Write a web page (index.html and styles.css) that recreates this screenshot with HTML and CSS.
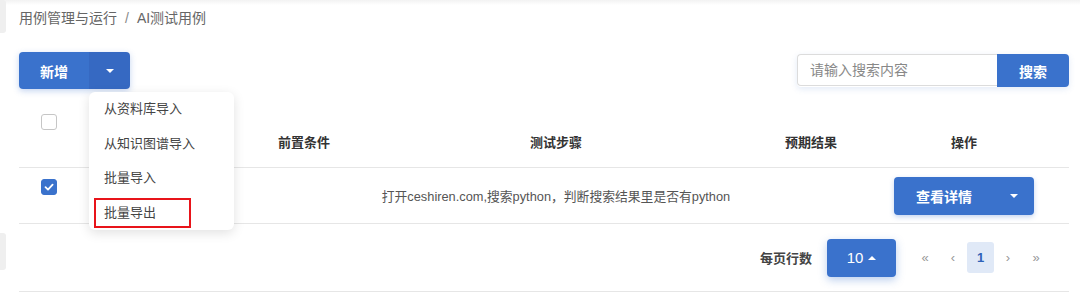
FILE: index.html
```html
<!DOCTYPE html>
<html lang="zh-CN">
<head>
    <meta charset="UTF-8">
    <meta name="viewport" content="width=device-width, initial-scale=1.0">
    <title>AI测试用例</title>
    <link rel="stylesheet" href="styles.css">
</head>
<body>
    <div class="side">
        <div class="side-item top"></div>
        <div class="side-item low"></div>
    </div>
    <div class="main">
        <div class="breadcrumb">
            <span>用例管理与运行</span>
            <span class="sep">/</span>
            <span>AI测试用例</span>
        </div>

        <div class="toolbar">
            <div class="split">
                <button class="btn btn-main">新增</button>
                <button class="btn btn-drop"><span class="caret"></span></button>
                <div class="menu">
                    <div class="menu-item">从资料库导入</div>
                    <div class="menu-item">从知识图谱导入</div>
                    <div class="menu-item">批量导入</div>
                    <div class="menu-item">批量导出</div>
                    <div class="mark"></div>
                </div>
            </div>
            <div class="search">
                <input type="text" placeholder="请输入搜索内容">
                <button class="btn btn-search">搜索</button>
            </div>
        </div>

        <div class="table">
            <div class="row head">
                <div class="cell check-cell"><span class="checkbox"></span></div>
                <div class="cell"></div>
                <div class="cell">前置条件</div>
                <div class="cell">测试步骤</div>
                <div class="cell">预期结果</div>
                <div class="cell">操作</div>
                <div class="cell"></div>
            </div>
            <div class="row body">
                <div class="cell check-cell"><span class="checkbox checked">
                    <svg width="12" height="12" viewBox="0 0 12 12"><path d="M2.5 6.2 L5 8.6 L9.6 3.6" fill="none" stroke="#fff" stroke-width="1.8" stroke-linecap="round" stroke-linejoin="round"/></svg>
                </span></div>
                <div class="cell"></div>
                <div class="cell"></div>
                <div class="cell step">打开ceshiren.com,搜索python，判断搜索结果里是否有python</div>
                <div class="cell"></div>
                <div class="cell">
                    <button class="btn btn-detail">查看详情<span class="caret"></span></button>
                </div>
                <div class="cell"></div>
            </div>
        </div>

        <div class="pager">
            <span class="pager-label">每页行数</span>
            <button class="btn btn-size">10<span class="caret up"></span></button>
            <div class="pages">
                <span class="page">&laquo;</span>
                <span class="page">&lsaquo;</span>
                <span class="page current">1</span>
                <span class="page">&rsaquo;</span>
                <span class="page">&raquo;</span>
            </div>
        </div>
    </div>
</body>
</html>
```

FILE: styles.css
```css
body {
    margin: 0;
    height: 305px;
    display: flex;
    font-family: "Liberation Sans", "Noto Sans CJK SC", sans-serif;
    color: #333;
    background: linear-gradient(#f2f2f2, #fff 5px);
    overflow: hidden;
}
.side {
    width: 6px;
    display: flex;
    flex-direction: column;
}
.side-item {
    background-color: #efefef;
    border-radius: 0 3px 3px 0;
}
.side-item.top {
    height: 33px;
}
.side-item.low {
    height: 37px;
    margin-top: 200px;
}
.main {
    flex: 1;
    padding: 8px 11px 0 13px;
}
.breadcrumb {
    height: 20px;
    line-height: 20px;
    font-size: 14px;
    color: #666;
    display: flex;
    gap: 8px;
}
.breadcrumb .sep {
    color: #888;
}
.toolbar {
    margin-top: 24px;
    display: flex;
    justify-content: space-between;
    align-items: center;
}
.btn {
    border: none;
    color: #fff;
    background-color: #3a72cc;
    font-family: inherit;
    font-weight: bold;
    font-size: 14px;
    cursor: pointer;
    padding: 0;
}
.caret {
    display: inline-block;
    width: 0;
    height: 0;
    border-left: 4px solid transparent;
    border-right: 4px solid transparent;
    border-top: 4px solid #fff;
}
.caret.up {
    border-top: none;
    border-bottom: 4px solid #fff;
    margin-left: 5px;
    vertical-align: 3px;
}
.split {
    position: relative;
    display: flex;
    box-shadow: 0 2px 6px rgba(58, 114, 204, 0.3);
    border-radius: 4px;
}
.btn-main {
    width: 70px;
    height: 37px;
    border-radius: 4px 0 0 4px;
}
.btn-drop {
    width: 41px;
    height: 37px;
    background-color: #3669c2;
    border-radius: 0 4px 4px 0;
}
.btn-drop .caret {
    vertical-align: 3px;
}
.menu {
    position: absolute;
    left: 70px;
    top: 40px;
    width: 145px;
    height: 138px;
    background: #fff;
    border-radius: 6px;
    box-shadow: 0 3px 12px rgba(0, 0, 0, 0.12);
    z-index: 5;
}
.menu-item {
    height: 34.5px;
    line-height: 34.5px;
    padding-left: 15px;
    font-size: 13px;
    color: #444;
}
.mark {
    position: absolute;
    left: 5px;
    top: 106px;
    width: 93px;
    height: 26px;
    border: 2px solid #e8141a;
}
.search {
    display: flex;
    box-shadow: 0 2px 6px rgba(58, 114, 204, 0.15);
    border-radius: 4px;
}
.search input {
    width: 200px;
    height: 32px;
    box-sizing: border-box;
    border: 1px solid #dcdcdc;
    border-right: none;
    border-radius: 4px 0 0 4px;
    padding: 0 12px;
    font-family: inherit;
    font-size: 14px;
    outline: none;
}
.search input::placeholder {
    color: #888;
}
.btn-search {
    width: 72px;
    height: 33px;
    border-radius: 0 4px 4px 0;
}
.table {
    margin-top: 11px;
}
.row {
    display: grid;
    grid-template-columns: 56px 155px 148px 356px 154px 152px 1fr;
    border-bottom: 1px solid #e6e6e6;
}
.row.head {
    height: 67px;
    align-items: end;
    font-size: 13px;
    font-weight: bold;
    color: #333;
}
.row.head .cell {
    padding-bottom: 16px;
}
.row.head .check-cell {
    align-self: start;
    padding-top: 14px;
    padding-bottom: 0;
}
.row.body {
    height: 55px;
    align-items: center;
    font-size: 12.8px;
    color: #555;
}
.row.body .check-cell {
    align-self: start;
    padding-top: 11px;
}
.cell {
    text-align: center;
    white-space: nowrap;
}
.check-cell {
    text-align: left;
    padding-left: 22px;
}
.checkbox {
    display: flex;
    align-items: center;
    justify-content: center;
    width: 16px;
    height: 16px;
    box-sizing: border-box;
    border: 1.5px solid #c6c6c6;
    border-radius: 3px;
    background: #fff;
}
.checkbox.checked {
    background: #3a72cc;
    border-color: #3a72cc;
}
.btn-detail {
    width: 140px;
    height: 38px;
    border-radius: 4px;
    box-shadow: 0 2px 5px rgba(58, 114, 204, 0.3);
    padding-left: 22px;
    text-align: left;
    position: relative;
}
.btn-detail .caret {
    position: absolute;
    right: 16px;
    top: 17px;
}
.pager {
    height: 67px;
    border-bottom: 1px solid #e6e6e6;
    display: flex;
    align-items: center;
    justify-content: flex-end;
    padding-right: 19px;
}
.pager-label {
    font-size: 13px;
    font-weight: bold;
    color: #444;
    margin-right: 15px;
}
.btn-size {
    width: 69px;
    height: 38px;
    border-radius: 4px;
    font-size: 15px;
    font-weight: normal;
    box-shadow: 0 3px 8px rgba(58, 114, 204, 0.35);
    margin-right: 15px;
}
.pages {
    display: flex;
    align-items: center;
}
.page {
    width: 28px;
    height: 31px;
    line-height: 31px;
    text-align: center;
    font-size: 13px;
    color: #999;
}
.page.current {
    width: 27px;
    background-color: #e0e9f7;
    border-radius: 3px;
    color: #2f62b8;
    font-weight: bold;
}
```
